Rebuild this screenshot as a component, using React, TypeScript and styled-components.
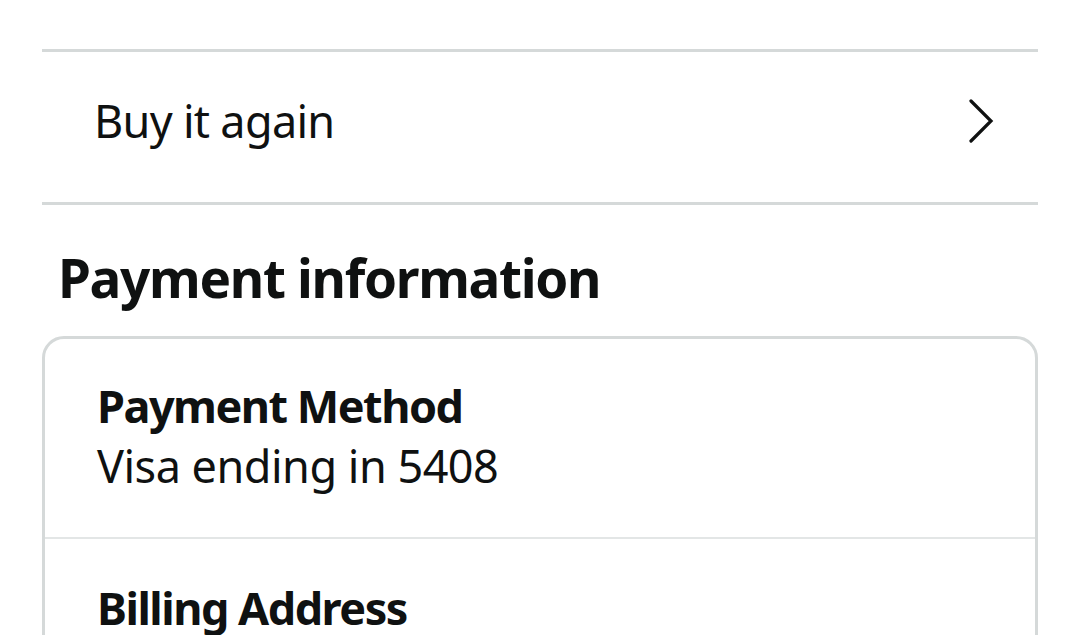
import React from 'react'
import styled, { createGlobalStyle } from 'styled-components'

const GlobalStyle = createGlobalStyle`
  html, body {
    margin: 0;
    padding: 0;
    background: #ffffff;
  }
  body {
    font-family: 'Noto Sans', 'Open Sans', Arial, sans-serif;
    color: #0f1111;
  }
`

const Page = styled.div`
  padding: 49px 42px 0;
  height: 635px;
  box-sizing: border-box;
  overflow: hidden;
`

const Divider = styled.div`
  height: 3px;
  background: #d5d9d9;
`

const LinkRow = styled.div`
  height: 150px;
  box-sizing: border-box;
  display: flex;
  align-items: center;
  justify-content: space-between;
  padding: 0 44px 12px 52px;
  font-size: 45px;
  line-height: 60px;
  letter-spacing: -0.7px;
  cursor: pointer;
`

const SectionTitle = styled.h2`
  margin: 40px 0 0 16px;
  font-size: 53px;
  line-height: 65px;
  font-weight: 700;
  letter-spacing: -1.3px;
`

const Card = styled.div`
  margin-top: 26px;
  border: 3px solid #d5d9d9;
  border-radius: 22px;
`

const CardSection = styled.div<{ last?: boolean }>`
  padding: ${(p) => (p.last ? '39px' : '37px')} 52px 41px;
  border-bottom: ${(p) => (p.last ? 'none' : '2px solid #e3e6e6')};
`

const Label = styled.div`
  font-size: 45px;
  line-height: 60px;
  font-weight: 700;
  letter-spacing: -1.5px;
`

const Value = styled.div`
  font-size: 45px;
  line-height: 60px;
  letter-spacing: -0.5px;
`

const Chevron = () => (
  <svg width="26" height="44" viewBox="0 0 26 44" fill="none">
    <path
      d="M3 2 L23 22 L3 42"
      stroke="#0f1111"
      strokeWidth="3.2"
      strokeLinecap="round"
      strokeLinejoin="miter"
    />
  </svg>
)

export default function App() {
  return (
    <>
      <GlobalStyle />
      <Page>
        <Divider />
        <LinkRow>
          <span>Buy it again</span>
          <Chevron />
        </LinkRow>
        <Divider />
        <SectionTitle>Payment information</SectionTitle>
        <Card>
          <CardSection>
            <Label>Payment Method</Label>
            <Value>Visa ending in 5408</Value>
          </CardSection>
          <CardSection last>
            <Label>Billing Address</Label>
          </CardSection>
        </Card>
      </Page>
    </>
  )
}
